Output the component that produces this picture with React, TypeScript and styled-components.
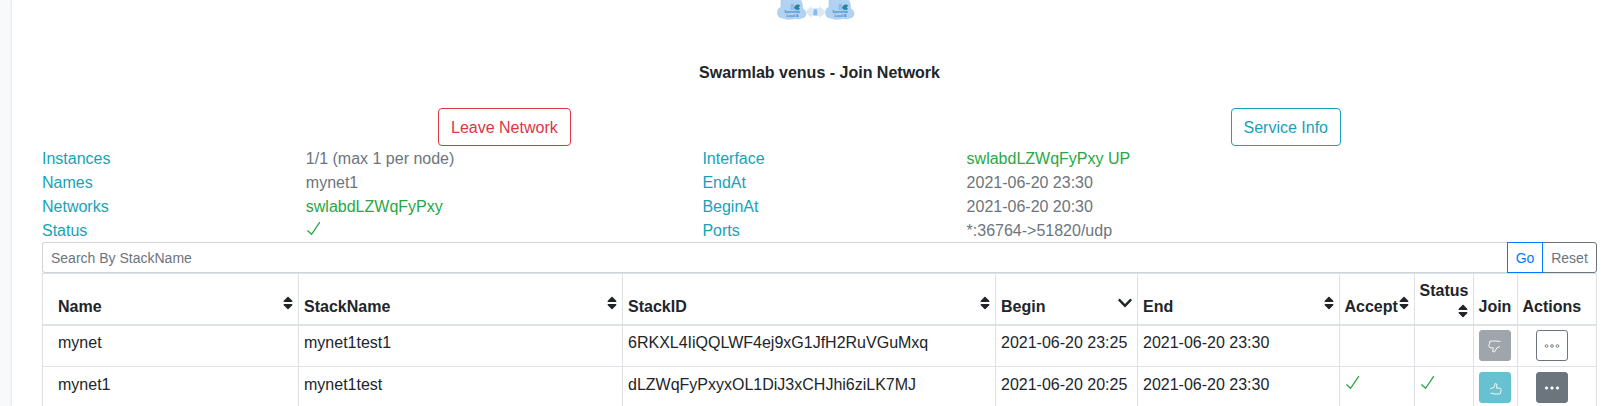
import React from 'react';
import styled, { createGlobalStyle } from 'styled-components';
import { FaSort, FaChevronDown } from 'react-icons/fa';

const GlobalStyle = createGlobalStyle`
  *, *::before, *::after { box-sizing: border-box; }
  html, body { margin: 0; background: #f8f9fa; overflow: hidden; }
  body {
    font-family: "Liberation Sans", Arial, sans-serif;
    font-size: 16px;
    line-height: 24px;
    color: #212529;
  }
`;

const Page = styled.div`
  display: flex;
  height: 406px;
  overflow: hidden;
  background: #f8f9fa;
`;

const Card = styled.main`
  flex: 1;
  min-width: 0;
  margin-left: 12px;
  padding: 0 23px 0 30px;
  background: #fff;
  box-shadow: 0 0 3px rgba(0, 0, 0, 0.14);
`;

const LogoBar = styled.div`
  display: flex;
  justify-content: center;
  height: 60px;
  padding-right: 8px;
`;

const Title = styled.h1`
  height: 24px;
  margin: 0 0 24px;
  font-size: 16px;
  line-height: 26px;
  font-weight: 700;
  text-align: center;
`;

const Columns = styled.section<{ $template: string }>`
  display: grid;
  grid-template-columns: ${(p) => p.$template};
  width: 1585px;
  margin-left: -15px;
`;

const ButtonLine = styled.div`
  display: flex;
  padding-left: calc(50% + 14.75px);
`;

const OutlineButton = styled.button<{ $color: string }>`
  height: 38px;
  padding: 2px 12px 0;
  border: 1px solid ${(p) => p.$color};
  border-radius: 4px;
  background: transparent;
  color: ${(p) => p.$color};
  font: inherit;
  white-space: nowrap;
`;

const InfoColumn = styled.div`
  padding-left: 15px;
`;

const InfoText = styled.div<{ $color: string }>`
  display: flow-root;
  height: 24px;
  line-height: 26px;
  color: ${(p) => p.$color};
`;

const SearchBar = styled.div`
  display: flex;
  height: 31px;
`;

const SearchInput = styled.input`
  flex: 1;
  min-width: 0;
  padding: 2px 8px 0;
  border: 1px solid #ced4da;
  border-right: 0;
  border-radius: 3px 0 0 3px;
  background: #fff;
  font: 14px/21px "Liberation Sans", Arial, sans-serif;
  &::placeholder { color: #6c757d; opacity: 1; }
`;

const SearchButton = styled.button<{ $color: string; $width: number; $last?: boolean }>`
  position: relative;
  z-index: ${(p) => (p.$last ? 0 : 1)};
  width: ${(p) => p.$width}px;
  margin-left: ${(p) => (p.$last ? '-1px' : '0')};
  padding: 2px 0 0;
  border: 1px solid ${(p) => p.$color};
  border-radius: ${(p) => (p.$last ? '0 3px 3px 0' : '0')};
  background: #fff;
  color: ${(p) => p.$color};
  font: 14px/21px "Liberation Sans", Arial, sans-serif;
`;

const Table = styled.table`
  width: 1555px;
  table-layout: fixed;
  border-collapse: separate;
  border-spacing: 0;
  border-top: 1px solid #dee2e6;
  border-left: 1px solid #dee2e6;
`;

const HeadCell = styled.th`
  height: 52px;
  padding: 4px 5px 5px;
  border-right: 1px solid #dee2e6;
  border-bottom: 2px solid #dee2e6;
  text-align: left;
  vertical-align: bottom;
  &:first-child { padding-left: 15px; }
  &:nth-child(n + 6) { padding-left: 4.5px; }
`;

const HeadContent = styled.div<{ $stacked?: boolean }>`
  display: flex;
  flex-direction: ${(p) => (p.$stacked ? 'column' : 'row')};
  justify-content: space-between;
  height: ${(p) => (p.$stacked ? '40px' : '24px')};
`;

const SortIcon = styled.span<{ $stacked?: boolean }>`
  display: flex;
  align-self: ${(p) => (p.$stacked ? 'flex-end' : 'flex-start')};
  svg { display: block; }
`;

const Cell = styled.td<{ $top: number }>`
  height: 41px;
  padding: ${(p) => p.$top}px 5px 0;
  border-right: 1px solid #dee2e6;
  border-bottom: 1px solid #dee2e6;
  line-height: 26px;
  vertical-align: top;
  white-space: nowrap;
  &:first-child { padding-left: 15px; }
`;

const ButtonHolder = styled.div<{ $indent?: number }>`
  display: flex;
  padding-left: ${(p) => p.$indent ?? 0}px;
`;

const IconButton = styled.button<{ $fill: string; $border: string; $color: string }>`
  display: flex;
  align-items: center;
  justify-content: center;
  width: 32px;
  height: 31px;
  padding: 0;
  border: 1px solid ${(p) => p.$border};
  border-radius: 3px;
  background: ${(p) => p.$fill};
  color: ${(p) => p.$color};
`;

const CheckSvg = styled.svg`
  display: block;
  margin-top: 3px;
`;

const Check = () => (
  <CheckSvg width="16" height="16" viewBox="0 0 16 16" fill="none" stroke="#28a745" strokeWidth="1.3">
    <path d="M1.4 9.4 5.6 13.3 13.800 1.200" />
  </CheckSvg>
);

const Thumb = ({ down }: { down?: boolean }) => (
  <svg width="16" height="16" viewBox="0 0 16 16" fill="none" stroke="currentColor" strokeOpacity=".9" strokeWidth="1" strokeLinejoin="round">
    {down ? (
      <path d="M13.300 3.500 9 3H5.500L2.800 3.300 2.600 5.200 1.700 7.800 3 9.800H6.300L5.700 13.500 7.500 14 9.900 9.800 13 8.500" />
    ) : (
      <path d="M3.300 8.500 6.800 7.700 8.300 3.500 10 4.300 9.500 8.200H13.500L14.200 9.500 13.300 13.600 12 14H8L3.500 13" />
    )}
  </svg>
);

const Dots = ({ hollow }: { hollow?: boolean }) => (
  <svg width="16" height="6" viewBox="0 0 16 6" fill={hollow ? 'none' : 'currentColor'} stroke="currentColor" strokeWidth={hollow ? 0.9 : 0.5}>
    {[2.5, 8, 13.5].map((x) => (
      <circle key={x} cx={x} cy="3" r="1.35" />
    ))}
  </svg>
);

const CloudText = styled.text`
  font: 700 3.3px "Liberation Sans", Arial, sans-serif;
  fill: #2f8ad2;
  text-anchor: middle;
`;

const Cloud = ({ x, name }: { x: number; name: string }) => (
  <g transform={`translate(${x} 0)`}>
    <path
      d="M3.500-1V7C1 8 0 10 0 12.500 0 16 2 18 5 18c4 1.600 9 1.600 13 .5 2 .6 5 .5 6-.5 3 0 4.500-2 4.500-4.500S27 9.500 25 8.500C25.500 5 24 1 22-1Z"
      fill="#b2d2f2"
      stroke="#a5c9ec"
      strokeWidth=".6"
    />
    <path d="M13.500 5.500h2.500v4h-2.500zM14 5.500V4h1.500v1.500" fill="#9cc6e8" stroke="#6daedd" strokeWidth=".5" />
    <path d="M16.500 8c1-3.500 4-4.500 6.500-2l-2 1 1.500 2c-2 1.500-4.500 1-6-1Z" fill="#287f9f" />
    <CloudText x="14.500" y="12.600">Swarmlab</CloudText>
    <CloudText x="15" y="16.800">{name}</CloudText>
  </g>
);

const Logo = () => (
  <svg width="78" height="22" viewBox="0 0 78 22">
    <Cloud x={0.5} name="Local A" />
    <Cloud x={48.5} name="Local B" />
    <path d="m28.500 12 6-6.500v2.500h8V5.500l6 6.500-6 6.500V16h-8v2.500Z" fill="#dbe8f8" />
    <path d="M36.800 11h3.200v4h-3.200zM37.300 11V9.500h2.200V11" fill="#8dbce8" stroke="#7bb2df" strokeWidth=".5" />
  </svg>
);

const TEAL = '#17a2b8';
const GREEN = '#28a745';
const GRAY = '#6c757d';

type Entry = { text?: string; color: string };

const infoColumns: Entry[][] = [
  ['Instances', 'Names', 'Networks', 'Status'].map((text) => ({ text, color: TEAL })),
  [
    { text: '1/1 (max 1 per node)', color: GRAY },
    { text: 'mynet1', color: GRAY },
    { text: 'swlabdLZWqFyPxy', color: GREEN },
    { color: GREEN },
  ],
  ['Interface', 'EndAt', 'BeginAt', 'Ports'].map((text) => ({ text, color: TEAL })),
  [
    { text: 'swlabdLZWqFyPxy UP', color: GREEN },
    { text: '2021-06-20 23:30', color: GRAY },
    { text: '2021-06-20 20:30', color: GRAY },
    { text: '*:36764->51820/udp', color: GRAY },
  ],
];

const columns = [
  { title: 'Name', width: 256, sort: 'both' },
  { title: 'StackName', width: 324, sort: 'both' },
  { title: 'StackID', width: 373, sort: 'both' },
  { title: 'Begin', width: 142, sort: 'down' },
  { title: 'End', width: 202, sort: 'both' },
  { title: 'Accept', width: 75, sort: 'both' },
  { title: 'Status', width: 59, sort: 'both', stacked: true },
  { title: 'Join', width: 44 },
  { title: 'Actions', width: 79 },
];

const rows = [
  { name: 'mynet', stack: 'mynet1test1', id: '6RKXL4IiQQLWF4ej9xG1JfH2RuVGuMxq', begin: '2021-06-20 23:25', end: '2021-06-20 23:30', active: false },
  { name: 'mynet1', stack: 'mynet1test', id: 'dLZWqFyPxyxOL1DiJ3xCHJhi6ziLK7MJ', begin: '2021-06-20 20:25', end: '2021-06-20 23:30', active: true },
];

const Row = ({ row, top }: { row: (typeof rows)[number]; top: number }) => {
  const joinColor = row.active ? '#68c1d0' : '#a0a5ab';
  return (
    <tr>
      {[row.name, row.stack, row.id, row.begin, row.end].map((text, i) => (
        <Cell key={i} $top={top}>{text}</Cell>
      ))}
      <Cell $top={top}>{row.active && <Check />}</Cell>
      <Cell $top={top}>{row.active && <Check />}</Cell>
      <Cell $top={top}>
        <ButtonHolder>
          <IconButton $fill={joinColor} $border={joinColor} $color="#fff">
            <Thumb down={!row.active} />
          </IconButton>
        </ButtonHolder>
      </Cell>
      <Cell $top={top}>
        <ButtonHolder $indent={13}>
          <IconButton $fill={row.active ? GRAY : '#fff'} $border={GRAY} $color={row.active ? '#fff' : GRAY}>
            <Dots hollow={!row.active} />
          </IconButton>
        </ButtonHolder>
      </Cell>
    </tr>
  );
};

export default function App() {
  return (
    <Page>
      <GlobalStyle />
      <Card>
        <LogoBar>
          <Logo />
        </LogoBar>
        <Title>Swarmlab venus - Join Network</Title>
        <Columns $template="1fr 1fr">
          <ButtonLine>
            <OutlineButton $color="#dc3545">Leave Network</OutlineButton>
          </ButtonLine>
          <ButtonLine>
            <OutlineButton $color={TEAL}>Service Info</OutlineButton>
          </ButtonLine>
        </Columns>
        <Columns $template="263.8px 396.6px 264.2px 1fr">
          {infoColumns.map((entries, i) => (
            <InfoColumn key={i}>
              {entries.map((entry, j) => (
                <InfoText key={j} $color={entry.color}>{entry.text ?? <Check />}</InfoText>
              ))}
            </InfoColumn>
          ))}
        </Columns>
        <SearchBar>
          <SearchInput placeholder="Search By StackName" />
          <SearchButton $color="#007bff" $width={36}>Go</SearchButton>
          <SearchButton $color={GRAY} $width={55} $last>Reset</SearchButton>
        </SearchBar>
        <Table>
          <colgroup>
            {columns.map((c) => (
              <col key={c.title} width={c.width} />
            ))}
          </colgroup>
          <thead>
            <tr>
              {columns.map((c) => (
                <HeadCell key={c.title}>
                  <HeadContent $stacked={c.stacked}>
                    <span>{c.title}</span>
                    {c.sort && (
                      <SortIcon $stacked={c.stacked}>
                        {c.sort === 'down' ? <FaChevronDown size={16} style={{ width: 14 }} /> : <FaSort size={16} style={{ width: 10 }} />}
                      </SortIcon>
                    )}
                  </HeadContent>
                </HeadCell>
              ))}
            </tr>
          </thead>
          <tbody>
            {rows.map((row, i) => (
              <Row key={row.id} row={row} top={i === 0 ? 4 : 5} />
            ))}
          </tbody>
        </Table>
      </Card>
    </Page>
  );
}
